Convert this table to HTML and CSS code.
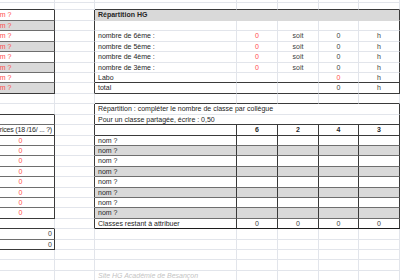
FILE: index.html
```html
<!DOCTYPE html>
<html lang="fr">
<head>
<meta charset="utf-8">
<title>Répartition HG</title>
<link rel="stylesheet" href="styles.css">
</head>
<body>
<table class="sheet">
  <colgroup>
    <col class="ca"><col class="cb"><col class="cc"><col class="cn"><col class="cn"><col class="cm"><col class="cn">
  </colgroup>
  <tr class="h3"><td></td><td></td><td></td><td></td><td></td><td></td><td></td></tr>
  <tr class="h7"><td class="bb"></td><td></td><td class="bb"></td><td class="bb"></td><td class="bb"></td><td class="bb"></td><td class="bb"></td></tr>

  <tr class="h11"><td class="bbm br nm red">nom ?</td><td class="br"></td><td colspan="5" class="g b l br hb">Répartition HG</td></tr>
  <tr class="h10"><td class="g bbm br nm red">nom ?</td><td class="br"></td><td></td><td></td><td></td><td></td><td class="br"></td></tr>
  <tr class="h11"><td class="bbm br nm red">nom ?</td><td class="br"></td><td class="l">nombre de 6ème :</td><td class="c red">0</td><td class="c v">soit</td><td class="c v">0</td><td class="c v br">h</td></tr>
  <tr class="h10"><td class="g bbm br nm red">nom ?</td><td class="br"></td><td class="l">nombre de 5ème :</td><td class="c red">0</td><td class="c v">soit</td><td class="c v">0</td><td class="c v br">h</td></tr>
  <tr class="h11"><td class="bbm br nm red">nom ?</td><td class="br"></td><td class="l">nombre de 4ème :</td><td class="c red">0</td><td class="c v">soit</td><td class="c v">0</td><td class="c v br">h</td></tr>
  <tr class="h10"><td class="g bbm br nm red">nom ?</td><td class="br"></td><td class="l">nombre de 3ème :</td><td class="c red">0</td><td class="c v">soit</td><td class="c v">0</td><td class="c v br">h</td></tr>
  <tr class="h10"><td class="bbm br nm red">nom ?</td><td class="br"></td><td class="l bb">Labo</td><td class="bb"></td><td class="bb"></td><td class="c red bb">0</td><td class="c v br bb">h</td></tr>
  <tr class="h11"><td class="g bb br nm red">nom ?</td><td class="br"></td><td class="l bb">total</td><td class="bb"></td><td class="bb"></td><td class="c v bb">0</td><td class="c v br bb">h</td></tr>

  <tr class="h10"><td></td><td></td><td class="bb"></td><td class="bb"></td><td class="bb"></td><td class="bb"></td><td class="bb"></td></tr>
  <tr class="h11"><td class="bb"></td><td class="br"></td><td colspan="5" class="l br">Répartition : compléter le nombre de classe par collègue</td></tr>
  <tr class="h10"><td class="br bbm"></td><td class="br"></td><td colspan="5" class="l br bb">Pour un classe partagée, écrire : 0,50</td></tr>
  <tr class="h11"><td class="br bb"><div class="ra">rices (18 /16/ ... ?)</div></td><td class="br"></td><td class="br bb"></td><td class="c b br bb">6</td><td class="c b br bb">2</td><td class="c b br bb">4</td><td class="c b br bb">3</td></tr>

  <tr class="h10"><td class="z red br bbm">0</td><td class="br"></td><td class="l br bbm">nom ?</td><td class="br bbm"></td><td class="br bbm"></td><td class="br bbm"></td><td class="br bbm"></td></tr>
  <tr class="h10"><td class="z red br bbm">0</td><td class="br"></td><td class="g l br bbm">nom ?</td><td class="g br bbm"></td><td class="g br bbm"></td><td class="g br bbm"></td><td class="g br bbm"></td></tr>
  <tr class="h11"><td class="z red br bbm">0</td><td class="br"></td><td class="l br bbm">nom ?</td><td class="br bbm"></td><td class="br bbm"></td><td class="br bbm"></td><td class="br bbm"></td></tr>
  <tr class="h10"><td class="z red br bbm">0</td><td class="br"></td><td class="g l br bbm">nom ?</td><td class="g br bbm"></td><td class="g br bbm"></td><td class="g br bbm"></td><td class="g br bbm"></td></tr>
  <tr class="h11"><td class="z red br bbm">0</td><td class="br"></td><td class="l br bbm">nom ?</td><td class="br bbm"></td><td class="br bbm"></td><td class="br bbm"></td><td class="br bbm"></td></tr>
  <tr class="h10"><td class="z red br bbm">0</td><td class="br"></td><td class="g l br bbm">nom ?</td><td class="g br bbm"></td><td class="g br bbm"></td><td class="g br bbm"></td><td class="g br bbm"></td></tr>
  <tr class="h10"><td class="z red br bbm">0</td><td class="br"></td><td class="l br bbm">nom ?</td><td class="br bbm"></td><td class="br bbm"></td><td class="br bbm"></td><td class="br bbm"></td></tr>
  <tr class="h11"><td class="z red br bb">0</td><td class="br"></td><td class="g l br bbm">nom ?</td><td class="g br bbm"></td><td class="g br bbm"></td><td class="g br bbm"></td><td class="g br bbm"></td></tr>
  <tr class="h10"><td class="bb"></td><td class="br"></td><td class="l br bk">Classes restant à attribuer</td><td class="c v br bk">0</td><td class="c v br bk">0</td><td class="c v br bk">0</td><td class="c v br bk">0</td></tr>

  <tr class="h11"><td class="r v br bbm">0</td><td></td><td></td><td></td><td></td><td></td><td></td></tr>
  <tr class="h10"><td class="r v br bb">0</td><td></td><td></td><td></td><td></td><td></td><td></td></tr>
  <tr class="h10"><td></td><td></td><td></td><td></td><td></td><td></td><td></td></tr>
  <tr class="h11"><td></td><td></td><td></td><td></td><td></td><td></td><td></td></tr>
  <tr class="h10"><td></td><td></td><td class="l foot">Site HG Académie de Besançon</td><td></td><td></td><td></td><td></td></tr>
</table>
</body>
</html>
```

FILE: styles.css
```css
html, body {
  margin: 0;
  padding: 0;
  background: #ffffff;
}

body {
  font-family: "Liberation Sans", Arial, sans-serif;
  font-size: 7px;
  color: #262626;
  overflow: hidden;
}

.sheet {
  border-collapse: separate;
  border-spacing: 0;
  table-layout: fixed;
  width: 400px;
}

.ca { width: 55px; }
.cb { width: 40px; }
.cc { width: 142px; }
.cn { width: 41px; }
.cm { width: 40px; }

.h3 { height: 3px; }
.h7 { height: 7px; }
.h10 { height: 10px; }
.h11 { height: 11px; }

.sheet td {
  padding: 0;
  border-right: 1px solid #e2e5eb;
  border-bottom: 1px solid #e2e5eb;
  white-space: nowrap;
  overflow: hidden;
  line-height: 8px;
  vertical-align: middle;
}

.sheet td.bb { border-bottom-color: #3a3a3a; }
.sheet td.bbm { border-bottom-color: #6e6e6e; }
.sheet td.bk { border-bottom-color: #1c1c1c; }
.sheet td.br { border-right-color: #3a3a3a; }
.sheet td.hb { border-bottom-color: #d9d9d9; }

.g { background: #d9d9d9; }
.b { font-weight: bold; }
.red { color: #ff4d4d; }
.v { color: #3c3c3c; }
.c { text-align: center; }
.r { text-align: right; padding-right: 2px !important; }
.sheet td.l { padding-left: 3px; }
.nm { text-indent: -8px; }
.sheet td.z { text-align: center; padding-right: 13px; }

.ra {
  display: flex;
  justify-content: flex-end;
  padding-right: 2px;
  letter-spacing: -0.2px;
}

.foot {
  color: #c4c4c4;
  font-style: italic;
}
```
